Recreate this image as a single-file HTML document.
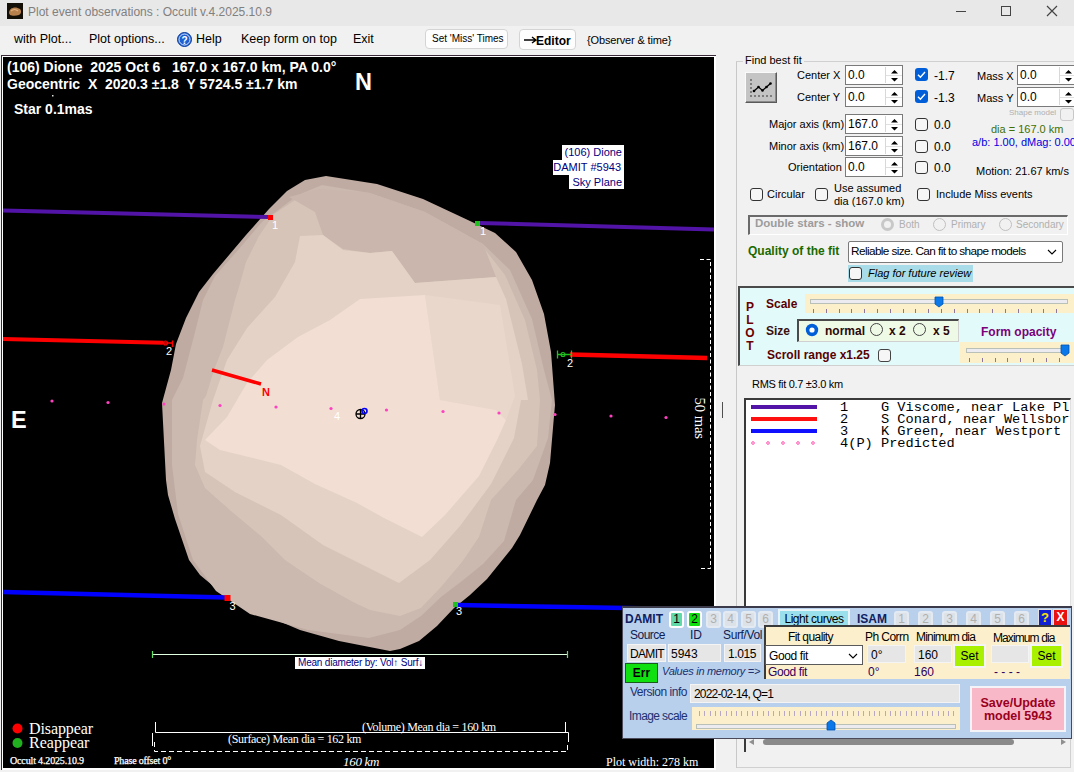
<!DOCTYPE html>
<html><head><meta charset="utf-8">
<style>
*{margin:0;padding:0;box-sizing:border-box}
html,body{width:1074px;height:772px;overflow:hidden;background:#f1f1f1;font-family:"Liberation Sans",sans-serif;font-size:12px;color:#000}
.a{position:absolute;white-space:nowrap;line-height:1}
#plot{position:absolute;left:0;top:0}
</style></head><body>
<!-- title bar -->
<div class="a" style="left:0;top:0;width:1074px;height:26px;background:#e8e8e8"></div>
<svg class="a" style="left:7px;top:3px" width="16" height="16"><rect width="16" height="16" fill="#141008"/><path d="M2 10C2 7 4 5 6 5C8 4 11 5 13 6C15 8 14 11 12 12C9 13 5 13 3 12Z" fill="#b8804a"/><path d="M4 8C6 6 9 6 11 8" stroke="#e0b080" stroke-width="1.2" fill="none"/></svg>
<div class="a" style="left:28px;top:6px;font-size:12px;color:#808080">Plot event observations : Occult v.4.2025.10.9</div>
<div class="a" style="left:956px;top:11px;width:10px;height:1px;background:#444"></div>
<div class="a" style="left:1001px;top:6px;width:10px;height:10px;border:1px solid #444"></div>
<svg class="a" style="left:1046px;top:5px" width="12" height="12"><path d="M1 1L11 11M11 1L1 11" stroke="#444" stroke-width="1.2"/></svg>

<!-- menu -->
<div class="a" style="left:14px;top:33px;font-size:12.5px">with Plot...</div>
<div class="a" style="left:89px;top:33px;font-size:12.5px">Plot options...</div>
<svg class="a" style="left:177px;top:32px" width="15" height="15"><circle cx="7.5" cy="7.5" r="7" fill="#1d5fd0" stroke="#0a3a9a"/><circle cx="7.5" cy="7.5" r="5.5" fill="none" stroke="#fff" stroke-width="0.8"/><text x="7.5" y="11.5" font-size="10" font-weight="bold" fill="#fff" text-anchor="middle" font-family="Liberation Sans">?</text></svg>
<div class="a" style="left:196px;top:33px;font-size:12.5px">Help</div>
<div class="a" style="left:241px;top:33px;font-size:12.5px">Keep form on top</div>
<div class="a" style="left:353px;top:33px;font-size:12.5px">Exit</div>
<div class="a" style="left:425px;top:29px;width:83px;height:20px;background:#fdfdfd;border:1px solid #d4d4d4;border-radius:4px"></div><div class="a" style="left:432px;top:34px;font-size:10px">Set 'Miss' Times</div>
<div class="a" style="left:519px;top:29px;width:57px;height:21px;background:#fdfdfd;border:1px solid #d4d4d4;border-radius:4px"></div><svg class="a" style="left:524px;top:36px" width="13" height="8"><path d="M0 4H11M8 1L12 4L8 7" stroke="#000" stroke-width="1.4" fill="none"/></svg><div class="a" style="left:536px;top:35px;font-size:12px;font-weight:bold">Editor</div>
<div class="a" style="left:587px;top:35px;font-size:11px;letter-spacing:-0.15px">{Observer &amp; time}</div>

<!-- plot frame -->
<div class="a" style="left:1px;top:55px;width:715px;height:715px;background:#3a2a3a"></div>
<div class="a" style="left:2px;top:56px;width:714px;height:714px;background:#fff"></div>
<div class="a" style="left:3px;top:57px;width:711px;height:711px;background:#000"></div>

<svg id="plot" width="716" height="772" style="position:absolute;left:0;top:0;white-space:pre">
  <!-- shape -->
  <g id="shape">
  <polygon fill="#bfaba2" points="326,176 377,184 423,199 470,221 495,233 516,252 532,280 544,314 551,352 555,405 554,416 550,463 545,485 537,500 520,535 512,548 487,579 470,595 454,608 437,626 419,641 400,649 390,651 339,641 300,630 267,616 237,604 224,595 200,575 189,560 175,519 168,495 166,480 162,403 171,370 176,344 186,318 199,292 213,274 246,235 269,209 287,191 305,180"/>
  <polygon fill="#cbb8ae" points="322,185 370,193 425,212 483,244 510,270 532,319 544,370 552,400 548,438 533,480 516,500 504,541 483,564 462,581 441,597 421,616 400,630 369,638 308,630 250,614 216,591 193,560 178,514 172,465 172,400 183,378 194,336 203,300 215,276 238,250 262,222 298,195"/>
  <polygon fill="#d6c4b9" points="298,198 322,192 370,199 425,215 483,247 505,275 525,320 537,370 540,400 537,446 518,470 491,500 479,537 462,562 441,587 421,608 400,616 370,610 353,602 319,583 285,560 262,537 231,511 205,488 195,465 197,440 203,400 206,396 214,370 223,347 235,300 239,287 246,262 259,236 274,214"/>
  <polygon fill="#cab6ac" points="289,197 319,189 370,193 425,212 483,244 496,277 415,283 392,251 370,253 343,249 323,235 315,212"/>
  <polygon fill="#e4d2c7" points="300,236 323,235 343,250 370,253 392,251 415,283 496,277 506,299 522,364 528,400 521,400 514,438 491,484 460,526 430,560 399,583 369,568 323,545 281,515 235,492 205,472 200,446 213,400 227,360 247,328 275,297 295,262"/>
  <polygon fill="#ead7cc" points="425,295 500,305 515,396 506,420 496,410 440,400"/>
  <polygon fill="#f2ded3" points="360,299 425,295 440,400 496,410 506,420 498,438 479,476 445,515 422,537 384,518 357,503 315,484 281,465 220,450 205,440 227,417 247,383 267,360 298,337 330,320"/>
  </g>
  <!-- chord 1 -->
  <line x1="3" y1="210.5" x2="268" y2="217" stroke="#5214a6" stroke-width="4"/>
  <line x1="479" y1="223" x2="714" y2="229.5" stroke="#5214a6" stroke-width="4"/>
  <rect x="268" y="215" width="5" height="5" fill="#ff0000"/>
  <rect x="475" y="221" width="5" height="5" fill="#20c020"/>
  <!-- chord 2 -->
  <line x1="3" y1="339" x2="163" y2="342.7" stroke="#ff0000" stroke-width="4"/>
  <path d="M163 343H172.5M172.5 340.5V347" stroke="#ff0000" stroke-width="1.5" fill="none"/>
  <circle cx="165.5" cy="343" r="2" fill="none" stroke="#ff0000" stroke-width="1.1"/>
  <line x1="570" y1="354.5" x2="707" y2="358" stroke="#ff0000" stroke-width="4.5"/>
  <path d="M557 354.5H572M557.5 350.5V358.5M571.5 350.5V358.5" stroke="#20c020" stroke-width="1.3" fill="none"/>
  <circle cx="563" cy="354.5" r="2" fill="none" stroke="#20c020" stroke-width="1.1"/>
  <!-- chord 3 -->
  <line x1="3" y1="592" x2="226" y2="597.5" stroke="#0000ff" stroke-width="4.5"/>
  <line x1="457" y1="605" x2="714" y2="609.5" stroke="#0000ff" stroke-width="4.5"/>
  <rect x="224.5" y="595" width="6" height="6" fill="#ff0000"/>
  <rect x="453" y="602" width="5" height="5" fill="#20c020"/>
  <!-- labels -->
  <g font-family="Liberation Sans" font-size="11" fill="#fff">
   <text x="272" y="229">1</text>
   <text x="480" y="235">1</text>
   <text x="166" y="355">2</text>
   <text x="567" y="367">2</text>
   <text x="229.5" y="610">3</text>
   <text x="456" y="615">3</text>
   <text x="334" y="420">4</text>
  </g>
  <!-- predicted dots -->
  <g fill="#ff40c0">
   <circle cx="52" cy="401" r="1.6"/><circle cx="108" cy="402.5" r="1.6"/><circle cx="164" cy="404" r="1.6"/>
   <circle cx="220" cy="405.5" r="1.6"/><circle cx="276" cy="407" r="1.6"/><circle cx="331" cy="408.5" r="1.6"/>
   <circle cx="386.5" cy="410" r="1.6"/><circle cx="443" cy="411.5" r="1.6"/><circle cx="499" cy="413" r="1.6"/>
   <circle cx="555" cy="414.5" r="1.6"/><circle cx="611" cy="416" r="1.6"/><circle cx="666" cy="417.5" r="1.6"/>
  </g>
  <!-- centre marker -->
  <circle cx="360.5" cy="414" r="4.5" fill="none" stroke="#000" stroke-width="1.3"/>
  <path d="M356 414H365M360.5 409.5V418.5" stroke="#000" stroke-width="1.3"/>
  <circle cx="364.5" cy="411" r="2.5" fill="none" stroke="#0000ff" stroke-width="1.6"/>
  <!-- N direction -->
  <line x1="212" y1="370" x2="261" y2="384" stroke="#ff0000" stroke-width="3.5"/>
  <text x="262" y="396" font-family="Liberation Sans" font-weight="bold" font-size="11" fill="#ff0000">N</text>
  <!-- header texts -->
  <g font-family="Liberation Sans" font-weight="bold" fill="#fff">
   <text x="7" y="72" font-size="14" xml:space="preserve">(106) Dione  2025 Oct 6   167.0 x 167.0 km, PA 0.0°</text>
   <text x="7" y="89" font-size="14" xml:space="preserve">Geocentric  X  2020.3 ±1.8  Y 5724.5 ±1.7 km</text>
   <text x="14" y="114" font-size="14">Star 0.1mas</text>
   <text x="355" y="90" font-size="23.5">N</text>
   <text x="11" y="428" font-size="23.5">E</text>
  </g>
  <rect x="52" y="95" width="1.5" height="1.5" fill="#ddd"/>
  <!-- sky plane label -->
  <rect x="562" y="145" width="62" height="15" fill="#fff"/>
  <rect x="553" y="160" width="71" height="15" fill="#fff"/>
  <rect x="569" y="175" width="55" height="14" fill="#fff"/>
  <g font-family="Liberation Sans" font-size="11" fill="#000080" text-anchor="end">
   <text x="622" y="156">(106) Dione</text>
   <text x="621" y="171">DAMIT #5943</text>
   <text x="622" y="186">Sky Plane</text>
  </g>
  <!-- 50 mas scale -->
  <path d="M700 259.5H710.5V568.5H700" stroke="#fff" stroke-width="1" fill="none" stroke-dasharray="4,2.5"/>
  <text transform="translate(695,397.5) rotate(90)" font-family="Liberation Serif" font-size="14.5" fill="#fff">50 mas</text>
  <!-- mean diameter bar -->
  <line x1="152" y1="654.5" x2="568" y2="654.5" stroke="#e0ffe0" stroke-width="1"/>
  <path d="M152.5 651V658M567.5 651V658" stroke="#60e060" stroke-width="1.2"/>
  <rect x="295" y="657" width="130" height="12" fill="#fff"/>
  <text x="298" y="666" font-family="Liberation Sans" font-size="10" fill="#000080" letter-spacing="-0.2">Mean diameter by: Vol↑ Surf↓</text>
  <!-- volume / surface bars -->
  <path d="M155.5 722V732.5H568.5V742" stroke="#fff" stroke-width="1" fill="none"/>
  <path d="M565.5 722V732" stroke="#fff" stroke-width="1" fill="none"/>
  <path d="M152.5 733V746" stroke="#fff" stroke-width="1" fill="none"/>
  <path d="M154.5 742V751.5H567.5V743" stroke="#fff" stroke-width="1" fill="none" stroke-dasharray="5,3"/>
  <g font-family="Liberation Serif" fill="#fff">
   <text x="362" y="731" font-size="12" letter-spacing="-0.32">(Volume) Mean dia = 160 km</text>
   <text x="228" y="743" font-size="12" letter-spacing="-0.32">(Surface) Mean dia = 162 km</text>
   <text x="343" y="766" font-size="13" font-style="italic" letter-spacing="-0.3">160 km</text>
   <text x="29" y="734" font-size="16" letter-spacing="-0.1">Disappear</text>
   <text x="29" y="748" font-size="16">Reappear</text>
   <text x="10" y="764" font-size="10" letter-spacing="-0.15" stroke="#fff" stroke-width="0.25">Occult 4.2025.10.9</text>
   <text x="114" y="764" font-size="10" letter-spacing="-0.19" stroke="#fff" stroke-width="0.25">Phase offset 0°</text>
   <text x="606" y="766" font-size="12">Plot width: 278 km</text>
  </g>
  <circle cx="17.5" cy="728.5" r="5" fill="#ff0000"/>
  <circle cx="17.5" cy="743" r="5" fill="#20b020"/>
</svg>

<!-- ===== RIGHT PANEL ===== -->
<div class="a" style="left:736px;top:61px;width:1px;height:707px;background:#c8c8c8"></div>
<div class="a" style="left:736px;top:61px;width:338px;height:1px;background:#d0d0d0"></div>
<div class="a" style="left:743px;top:55px;background:#f1f1f1;padding:0 2px;font-size:11px;color:#000">Find best fit</div>
<!-- fit button -->
<div class="a" style="left:745px;top:72px;width:32px;height:31px;background:#c4c4c4;border:1px solid;border-color:#fafafa #5a5a5a #5a5a5a #fafafa;box-shadow:inset -1px -1px 0 #8a8a8a"></div>
<svg class="a" style="left:749px;top:76px" width="24" height="24"><g fill="#000"><circle cx="2" cy="4" r=".7"/><circle cx="2" cy="8" r=".7"/><circle cx="2" cy="12" r=".7"/><circle cx="2" cy="16" r=".7"/><circle cx="2" cy="20" r=".7"/><circle cx="6" cy="20" r=".7"/><circle cx="10" cy="20" r=".7"/><circle cx="14" cy="20" r=".7"/><circle cx="18" cy="20" r=".7"/><circle cx="22" cy="20" r=".7"/></g><path d="M5 15L9.5 11L13.5 14.5L17.5 11L21.5 7.5" stroke="#000" stroke-width="1.3" fill="none"/><g fill="#000"><circle cx="5" cy="15" r="1.3"/><circle cx="9.5" cy="11" r="1.3"/><circle cx="13.5" cy="14.5" r="1.3"/><circle cx="17.5" cy="11" r="1.3"/><circle cx="21.5" cy="7.5" r="1.3"/></g></svg>

<div class="a" style="left:797px;top:70px;font-size:11px">Center X</div>
<div class="a" style="left:797px;top:92px;font-size:11px">Center Y</div>
<div class="a" style="left:769px;top:119px;font-size:11px">Major axis (km)</div>
<div class="a" style="left:769px;top:141px;font-size:11px">Minor axis (km)</div>
<div class="a" style="left:788px;top:162px;font-size:11px">Orientation</div>
<div class="a" style="left:845px;top:65px;width:58px;height:20px;background:#fff;border:1px solid #7a7a7a"><div class="a" style="left:2px;top:3px;font-size:12px">0.0</div><div class="a" style="left:39px;top:1px;width:17px;height:16px;border-left:1px solid #d8d8d8"><div class="a" style="left:0;top:8px;width:16px;height:1px;background:#e0e0e0"></div><svg class="a" style="left:4px;top:2px" width="9" height="14"><path d="M4.5 1L8 4.5H1Z M1 9H8L4.5 12.5Z" fill="#000"/></svg></div></div>
<div class="a" style="left:845px;top:87px;width:58px;height:20px;background:#fff;border:1px solid #7a7a7a"><div class="a" style="left:2px;top:3px;font-size:12px">0.0</div><div class="a" style="left:39px;top:1px;width:17px;height:16px;border-left:1px solid #d8d8d8"><div class="a" style="left:0;top:8px;width:16px;height:1px;background:#e0e0e0"></div><svg class="a" style="left:4px;top:2px" width="9" height="14"><path d="M4.5 1L8 4.5H1Z M1 9H8L4.5 12.5Z" fill="#000"/></svg></div></div>
<div class="a" style="left:845px;top:114px;width:58px;height:20px;background:#fff;border:1px solid #7a7a7a"><div class="a" style="left:2px;top:3px;font-size:12px">167.0</div><div class="a" style="left:39px;top:1px;width:17px;height:16px;border-left:1px solid #d8d8d8"><div class="a" style="left:0;top:8px;width:16px;height:1px;background:#e0e0e0"></div><svg class="a" style="left:4px;top:2px" width="9" height="14"><path d="M4.5 1L8 4.5H1Z M1 9H8L4.5 12.5Z" fill="#000"/></svg></div></div>
<div class="a" style="left:845px;top:136px;width:58px;height:20px;background:#fff;border:1px solid #7a7a7a"><div class="a" style="left:2px;top:3px;font-size:12px">167.0</div><div class="a" style="left:39px;top:1px;width:17px;height:16px;border-left:1px solid #d8d8d8"><div class="a" style="left:0;top:8px;width:16px;height:1px;background:#e0e0e0"></div><svg class="a" style="left:4px;top:2px" width="9" height="14"><path d="M4.5 1L8 4.5H1Z M1 9H8L4.5 12.5Z" fill="#000"/></svg></div></div>
<div class="a" style="left:845px;top:157px;width:58px;height:20px;background:#fff;border:1px solid #7a7a7a"><div class="a" style="left:2px;top:3px;font-size:12px">0.0</div><div class="a" style="left:39px;top:1px;width:17px;height:16px;border-left:1px solid #d8d8d8"><div class="a" style="left:0;top:8px;width:16px;height:1px;background:#e0e0e0"></div><svg class="a" style="left:4px;top:2px" width="9" height="14"><path d="M4.5 1L8 4.5H1Z M1 9H8L4.5 12.5Z" fill="#000"/></svg></div></div>
<div class="a" style="left:1017px;top:65px;width:60px;height:20px;background:#fff;border:1px solid #7a7a7a"><div class="a" style="left:2px;top:3px;font-size:12px">0.0</div><div class="a" style="left:41px;top:1px;width:17px;height:16px;border-left:1px solid #d8d8d8"><div class="a" style="left:0;top:8px;width:16px;height:1px;background:#e0e0e0"></div><svg class="a" style="left:4px;top:2px" width="9" height="14"><path d="M4.5 1L8 4.5H1Z M1 9H8L4.5 12.5Z" fill="#000"/></svg></div></div>
<div class="a" style="left:1017px;top:87px;width:60px;height:20px;background:#fff;border:1px solid #7a7a7a"><div class="a" style="left:2px;top:3px;font-size:12px">0.0</div><div class="a" style="left:41px;top:1px;width:17px;height:16px;border-left:1px solid #d8d8d8"><div class="a" style="left:0;top:8px;width:16px;height:1px;background:#e0e0e0"></div><svg class="a" style="left:4px;top:2px" width="9" height="14"><path d="M4.5 1L8 4.5H1Z M1 9H8L4.5 12.5Z" fill="#000"/></svg></div></div>
<svg class="a" style="left:915px;top:68px" width="13" height="13"><rect x="0" y="0" width="13" height="13" rx="3" fill="#005fd8"/><path d="M3 6.8L5.4 9.2L10 4" stroke="#fff" stroke-width="1.4" fill="none"/></svg>
<svg class="a" style="left:915px;top:90px" width="13" height="13"><rect x="0" y="0" width="13" height="13" rx="3" fill="#005fd8"/><path d="M3 6.8L5.4 9.2L10 4" stroke="#fff" stroke-width="1.4" fill="none"/></svg>
<div class="a" style="left:915px;top:118px;width:13px;height:13px;border:1px solid #333;border-radius:3px;background:#f6f6f6"></div>
<div class="a" style="left:915px;top:140px;width:13px;height:13px;border:1px solid #333;border-radius:3px;background:#f6f6f6"></div>
<div class="a" style="left:915px;top:161px;width:13px;height:13px;border:1px solid #333;border-radius:3px;background:#f6f6f6"></div>
<div class="a" style="left:934px;top:70px;font-size:12px">-1.7</div>
<div class="a" style="left:934px;top:92px;font-size:12px">-1.3</div>
<div class="a" style="left:934px;top:119px;font-size:12px">0.0</div>
<div class="a" style="left:934px;top:141px;font-size:12px">0.0</div>
<div class="a" style="left:934px;top:162px;font-size:12px">0.0</div>
<div class="a" style="left:977px;top:71px;font-size:11px">Mass X</div>
<div class="a" style="left:977px;top:93px;font-size:11px">Mass Y</div>
<div class="a" style="left:1009px;top:109px;font-size:8px;color:#b0b0b0">Shape model</div>
<div class="a" style="left:1060px;top:108px;width:14px;height:13px;border:1px solid #c8c8c8;border-radius:3px"></div>
<div class="a" style="left:991px;top:124px;font-size:11px;color:#407000">dia = 167.0 km</div>
<div class="a" style="left:972px;top:137px;font-size:11px;color:#0000e0">a/b: 1.00, dMag: 0.00</div>
<div class="a" style="left:976px;top:166px;font-size:11px">Motion: 21.67 km/s</div>
<div class="a" style="left:750px;top:188px;width:13px;height:13px;border:1px solid #333;border-radius:3px;background:#f6f6f6"></div>
<div class="a" style="left:815px;top:188px;width:13px;height:13px;border:1px solid #333;border-radius:3px;background:#f6f6f6"></div>
<div class="a" style="left:917px;top:188px;width:13px;height:13px;border:1px solid #333;border-radius:3px;background:#f6f6f6"></div>
<div class="a" style="left:767px;top:189px;font-size:11px">Circular</div>
<div class="a" style="left:834px;top:183px;font-size:11px">Use assumed</div>
<div class="a" style="left:834px;top:196px;font-size:11px">dia (167.0 km)</div>
<div class="a" style="left:936px;top:189px;font-size:11px">Include Miss events</div>
<!-- double stars -->
<div class="a" style="left:748px;top:215px;width:320px;height:20px;border:1px solid;border-color:#6a6a6a #fff #fff #6a6a6a;border-top-width:2px;border-left-width:2px"></div>
<div class="a" style="left:755px;top:218px;font-size:11.5px;font-weight:bold;color:#9c9c9c">Double stars - show</div>
<div class="a" style="left:881px;top:218px;width:13px;height:13px;border-radius:50%;border:3px solid #c8c8c8"></div>
<div class="a" style="left:899px;top:220px;font-size:10px;color:#b0b0b0">Both</div>
<div class="a" style="left:933px;top:218px;width:13px;height:13px;border-radius:50%;border:1px solid #c0c0c0"></div>
<div class="a" style="left:951px;top:220px;font-size:10px;color:#b0b0b0">Primary</div>
<div class="a" style="left:999px;top:218px;width:13px;height:13px;border-radius:50%;border:1px solid #c0c0c0"></div>
<div class="a" style="left:1016px;top:220px;font-size:10px;color:#b0b0b0">Secondary</div>
<!-- quality -->
<div class="a" style="left:748px;top:245px;font-size:12px;font-weight:bold;color:#1a6a00">Quality of the fit</div>
<div class="a" style="left:848px;top:241px;width:215px;height:22px;background:#fff;border:1px solid #7a7a7a;border-radius:2px"><div class="a" style="left:2px;top:4px;font-size:11.8px;letter-spacing:-0.6px">Reliable size. Can fit to shape models</div><svg class="a" style="left:198px;top:7px" width="10" height="7"><path d="M1 1L5 5L9 1" stroke="#000" stroke-width="1.1" fill="none"/></svg></div>
<div class="a" style="left:848px;top:265px;width:125px;height:17px;background:#a8dce8"></div>
<div class="a" style="left:849px;top:267px;width:13px;height:13px;border:1px solid #333;border-radius:3px;background:#f6f6f6"></div>
<div class="a" style="left:868px;top:268px;font-size:11px;font-style:italic">Flag for future review</div>
<!-- PLOT panel -->
<div class="a" style="left:738px;top:286px;width:336px;height:80px;background:#e2fafa;border-left:2px solid #4a4a4a;border-top:2px solid #4a4a4a;border-bottom:1px solid #d0d0d0"></div>
<div class="a" style="left:745px;top:301px;font-size:12px;font-weight:bold;color:#6a0000;line-height:13px;white-space:normal;width:10px;text-align:center">P<br>L<br>O<br>T</div>
<div class="a" style="left:766px;top:298px;font-size:12px;font-weight:bold;color:#5a0000">Scale</div>
<div class="a" style="left:805px;top:294px;width:269px;height:19px;background:#fcf0ca"></div>
<div class="a" style="left:810px;top:299px;width:258px;height:5px;background:#ececf0;border:1px solid #b8c0b8"></div><div class="a" style="left:813px;top:309px;width:256px;height:4px;background:repeating-linear-gradient(to right,#8a7898 0 1px,transparent 1px 12.8px)"></div>
<svg class="a" style="left:934px;top:296px" width="10" height="12"><path d="M1 1H9V8L5 11L1 8Z" fill="#0a78e8" stroke="#0050b0" stroke-width=".8"/></svg>
<div class="a" style="left:766px;top:325px;font-size:12px;font-weight:bold;color:#3a1010">Size</div>
<div class="a" style="left:797px;top:319px;width:162px;height:23px;background:#eefae6;border-left:2px solid #4a4a4a;border-top:2px solid #4a4a4a;border-right:1px solid #d0d0d0;border-bottom:1px solid #d0d0d0"></div>
<svg class="a" style="left:805px;top:323px" width="14" height="14"><circle cx="7" cy="7" r="6.2" fill="#005fd8"/><circle cx="7" cy="7" r="2.6" fill="#fff"/></svg>
<div class="a" style="left:825px;top:325px;font-size:12px;font-weight:bold;color:#2a0808">normal</div>
<div class="a" style="left:870px;top:323px;width:13px;height:13px;border-radius:50%;border:1px solid #444"></div>
<div class="a" style="left:889px;top:325px;font-size:12px;font-weight:bold;color:#2a0808">x 2</div>
<div class="a" style="left:913px;top:323px;width:13px;height:13px;border-radius:50%;border:1px solid #444"></div>
<div class="a" style="left:933px;top:325px;font-size:12px;font-weight:bold;color:#2a0808">x 5</div>
<div class="a" style="left:981px;top:326px;font-size:12px;font-weight:bold;color:#7a007a">Form opacity</div>
<div class="a" style="left:767px;top:349px;font-size:12px;font-weight:bold;color:#5a0000">Scroll range x1.25</div>
<div class="a" style="left:878px;top:349px;width:13px;height:13px;border:1px solid #444;border-radius:3px;background:#f6f6f6"></div>
<div class="a" style="left:960px;top:342px;width:114px;height:21px;background:#fcf0ca"></div>
<div class="a" style="left:966px;top:348px;width:102px;height:5px;background:#ececf0;border:1px solid #b8c0b8"></div><div class="a" style="left:969px;top:358px;width:100px;height:4px;background:repeating-linear-gradient(to right,#8a7898 0 1px,transparent 1px 12.8px)"></div>
<svg class="a" style="left:1060px;top:344px" width="10" height="13"><path d="M1 1H9V9L5 12L1 9Z" fill="#0a78e8" stroke="#0050b0" stroke-width=".8"/></svg>
<!-- RMS -->
<div class="a" style="left:752px;top:379px;font-size:11px;letter-spacing:-0.3px">RMS fit 0.7 &plusmn;3.0 km</div>
<!-- list box -->
<div class="a" style="left:744px;top:398px;width:327px;height:340px;background:#fff;border-left:2px solid #3a3a3a;border-top:2px solid #3a3a3a;border-right:1px solid #e0e0e0"></div>
<div class="a" style="left:751px;top:405px;width:66px;height:4px;background:#5214a6"></div>
<div class="a" style="left:751px;top:417px;width:66px;height:4px;background:#ff1010"></div>
<div class="a" style="left:751px;top:429px;width:66px;height:4px;background:#1010ff"></div>
<svg class="a" style="left:751px;top:440px" width="70" height="6"><g fill="none" stroke="#ff50b0" stroke-width="1"><circle cx="2" cy="3" r="1.3"/><circle cx="17" cy="3" r="1.3"/><circle cx="32" cy="3" r="1.3"/><circle cx="47" cy="3" r="1.3"/><circle cx="62" cy="3" r="1.3"/></g></svg>
<div class="a" style="left:746px;top:400px;width:323px;height:60px;overflow:hidden"><div class="a" style="left:94px;top:2px;font-family:'Liberation Mono',monospace;font-size:13.67px;line-height:12.1px;white-space:pre">1    G Viscome, near Lake Pl
2    S Conard, near Wellsbor
3    K Green, near Westport
4(P) Predicted</div></div>
<!-- scrollbar -->
<div class="a" style="left:744px;top:738px;width:325px;height:14px;background:#f1f1f1;border-left:2px solid #3a3a3a"></div>
<div class="a" style="left:763px;top:739px;width:251px;height:6px;background:#8a8a8a;border-radius:3px"></div>
<svg class="a" style="left:747px;top:738px" width="8" height="8"><path d="M7 1V7L2 4Z" fill="#909090"/></svg>
<svg class="a" style="left:1060px;top:738px" width="8" height="8"><path d="M1 1V7L6 4Z" fill="#909090"/></svg>
<div class="a" style="left:737px;top:767px;width:334px;height:1px;background:#d0d0d0"></div>
<div class="a" style="left:1070px;top:738px;width:1px;height:30px;background:#d0d0d0"></div>

<!-- ===== DAMIT PANEL ===== -->
<div class="a" style="left:722px;top:402px;width:1px;height:16px;background:#505050"></div>
<div class="a" style="left:622px;top:606px;width:450px;height:133px;background:#b8d0ec;border:1px solid #4a4a5a;border-top:2px solid #3a3a4a"></div>
<div class="a" style="left:625px;top:613px;font-size:12px;font-weight:bold;color:#102060">DAMIT</div>
<div class="a" style="left:669px;top:611px;width:15px;height:17px;border:2px solid #fff;border-radius:3px;background:#60d8a8;text-align:center;font-size:12px;line-height:13px;color:#000">1</div>
<div class="a" style="left:687px;top:611px;width:15px;height:17px;border:2px solid #fff;border-radius:3px;background:#10e010;text-align:center;font-size:12px;line-height:13px;color:#000">2</div>
<div class="a" style="left:706px;top:611px;width:15px;height:17px;border:2px solid #e4eaf2;border-radius:3px;background:#dde2e8;text-align:center;font-size:12px;line-height:13px;color:#b0b0b0">3</div>
<div class="a" style="left:723px;top:611px;width:15px;height:17px;border:2px solid #e4eaf2;border-radius:3px;background:#dde2e8;text-align:center;font-size:12px;line-height:13px;color:#b0b0b0">4</div>
<div class="a" style="left:741px;top:611px;width:15px;height:17px;border:2px solid #e4eaf2;border-radius:3px;background:#dde2e8;text-align:center;font-size:12px;line-height:13px;color:#b0b0b0">5</div>
<div class="a" style="left:758px;top:611px;width:15px;height:17px;border:2px solid #e4eaf2;border-radius:3px;background:#dde2e8;text-align:center;font-size:12px;line-height:13px;color:#b0b0b0">6</div>
<div class="a" style="left:780px;top:611px;width:68px;height:16px;background:#9ae0ec;outline:2px solid #e8f4f8;font-size:12px;text-align:center;line-height:16px;color:#000;letter-spacing:-0.47px">Light curves</div>
<div class="a" style="left:857px;top:613px;font-size:12px;font-weight:bold;color:#102060">ISAM</div>
<div class="a" style="left:894px;top:611px;width:15px;height:17px;border:2px solid #e4eaf2;border-radius:3px;background:#dde2e8;text-align:center;font-size:12px;line-height:13px;color:#b0b0b0">1</div>
<div class="a" style="left:918px;top:611px;width:15px;height:17px;border:2px solid #e4eaf2;border-radius:3px;background:#dde2e8;text-align:center;font-size:12px;line-height:13px;color:#b0b0b0">2</div>
<div class="a" style="left:942px;top:611px;width:15px;height:17px;border:2px solid #e4eaf2;border-radius:3px;background:#dde2e8;text-align:center;font-size:12px;line-height:13px;color:#b0b0b0">3</div>
<div class="a" style="left:966px;top:611px;width:15px;height:17px;border:2px solid #e4eaf2;border-radius:3px;background:#dde2e8;text-align:center;font-size:12px;line-height:13px;color:#b0b0b0">4</div>
<div class="a" style="left:990px;top:611px;width:15px;height:17px;border:2px solid #e4eaf2;border-radius:3px;background:#dde2e8;text-align:center;font-size:12px;line-height:13px;color:#b0b0b0">5</div>
<div class="a" style="left:1014px;top:611px;width:15px;height:17px;border:2px solid #e4eaf2;border-radius:3px;background:#dde2e8;text-align:center;font-size:12px;line-height:13px;color:#b0b0b0">6</div>
<div class="a" style="left:1039px;top:610px;width:12px;height:15px;background:#1020d0;color:#ffe000;font-weight:bold;font-size:13px;text-align:center;line-height:15px;outline:1px solid #e0e0e0">?</div>
<div class="a" style="left:1054px;top:610px;width:13px;height:15px;background:#e81010;color:#fff;font-weight:bold;font-size:12px;text-align:center;line-height:15px;outline:1px solid #e0e0e0">X</div>
<div class="a" style="left:630px;top:629px;font-size:12px;color:#102050;letter-spacing:-0.5px">Source</div>
<div class="a" style="left:690px;top:629px;font-size:12px;color:#102050">ID</div>
<div class="a" style="left:723px;top:629px;font-size:12px;color:#102050;letter-spacing:-0.375px">Surf/Vol</div>
<div class="a" style="left:627px;top:644px;width:39px;height:18px;background:#e6e6e6;border:1px solid #f4f4f4;font-size:12px;padding:3px 0 0 2px;letter-spacing:-0.66px">DAMIT</div>
<div class="a" style="left:668px;top:644px;width:53px;height:18px;background:#e6e6e6;border:1px solid #f4f4f4;font-size:12px;padding:3px 0 0 2px">5943</div>
<div class="a" style="left:724px;top:644px;width:37px;height:18px;background:#e6e6e6;border:1px solid #f4f4f4;font-size:12px;padding:3px 0 0 3px;letter-spacing:-0.4px">1.015</div>
<div class="a" style="left:625px;top:663px;width:33px;height:20px;background:#10e010;border:1px solid #1a5a1a;font-size:12px;font-weight:bold;text-align:center;line-height:18px">Err</div>
<div class="a" style="left:662px;top:666px;font-size:11px;font-style:italic;color:#203070;letter-spacing:-0.29px">Values in memory =&gt;</div>
<!-- yellow sub panel -->
<div class="a" style="left:764px;top:625px;width:306px;height:54px;background:#fcf0cc;border-left:2px solid #3a3a3a;border-top:2px solid #3a3a3a"></div>
<div class="a" style="left:788px;top:631px;font-size:12px;letter-spacing:-0.58px">Fit quality</div>
<div class="a" style="left:865px;top:631px;font-size:12px;letter-spacing:-0.55px">Ph Corrn</div>
<div class="a" style="left:916px;top:631px;font-size:12px;letter-spacing:-0.82px">Minimum dia</div>
<div class="a" style="left:993px;top:632px;font-size:12px;letter-spacing:-0.9px">Maximum dia</div>
<div class="a" style="left:765px;top:645px;width:98px;height:20px;background:#fff;border:1px solid #5a5a5a"><div class="a" style="left:3px;top:4px;font-size:12px;letter-spacing:-0.375px">Good fit</div><svg class="a" style="left:82px;top:7px" width="10" height="7"><path d="M1 1L5 5L9 1" stroke="#000" stroke-width="1.1" fill="none"/></svg></div>
<div class="a" style="left:867px;top:645px;width:39px;height:18px;background:#e6e6e6;border:1px solid #f4f4f4;font-size:12px;padding:3px 0 0 3px">0&deg;</div>
<div class="a" style="left:914px;top:645px;width:38px;height:18px;background:#e6e6e6;border:1px solid #f4f4f4;font-size:12px;padding:3px 0 0 3px">160</div>
<div class="a" style="left:955px;top:646px;width:29px;height:20px;background:#a8f000;outline:2px solid #f4f4f4;font-size:12px;text-align:center;line-height:20px">Set</div>
<div class="a" style="left:991px;top:645px;width:38px;height:18px;background:#e6e6e6;border:1px solid #f4f4f4"></div>
<div class="a" style="left:1032px;top:646px;width:29px;height:20px;background:#a8f000;outline:2px solid #f4f4f4;font-size:12px;text-align:center;line-height:20px">Set</div>
<div class="a" style="left:768px;top:666px;font-size:12px;color:#300060;letter-spacing:-0.375px">Good fit</div>
<div class="a" style="left:868px;top:666px;font-size:12px;color:#300060">0&deg;</div>
<div class="a" style="left:914px;top:666px;font-size:12px;color:#300060">160</div>
<div class="a" style="left:994px;top:666px;font-size:12px;color:#300060">- - - -</div>
<div class="a" style="left:630px;top:686px;font-size:12px;color:#203070;letter-spacing:-0.475px">Version info</div>
<div class="a" style="left:690px;top:684px;width:270px;height:19px;background:#e6e6e6;border:1px solid #f4f4f4;font-size:12px;padding:3px 0 0 3px;letter-spacing:-0.8px">2022-02-14, Q=1</div>
<div class="a" style="left:629px;top:710px;font-size:12px;color:#203070;letter-spacing:-0.6px">Image scale</div>
<div class="a" style="left:692px;top:707px;width:268px;height:23px;background:#fcf0cc"></div>
<div class="a" style="left:696px;top:724px;width:260px;height:5px;background:#ececf0;border:1px solid #b8c0b8"></div><div class="a" style="left:699px;top:711px;width:256px;height:5px;background:repeating-linear-gradient(to right,#b8a8c0 0 1px,transparent 1px 5.3px)"></div>
<svg class="a" style="left:826px;top:719px" width="10" height="12"><path d="M1 11H9V4L5 1L1 4Z" fill="#0a78e8" stroke="#0050b0" stroke-width=".8"/></svg>
<div class="a" style="left:970px;top:686px;width:96px;height:46px;background:#f8b8c8;border:2px solid #f4f4f8;text-align:center;font-size:12.5px;font-weight:bold;color:#9a0020;line-height:13px;padding-top:9px;white-space:normal">Save/Update<br>model 5943</div>
</body></html>
